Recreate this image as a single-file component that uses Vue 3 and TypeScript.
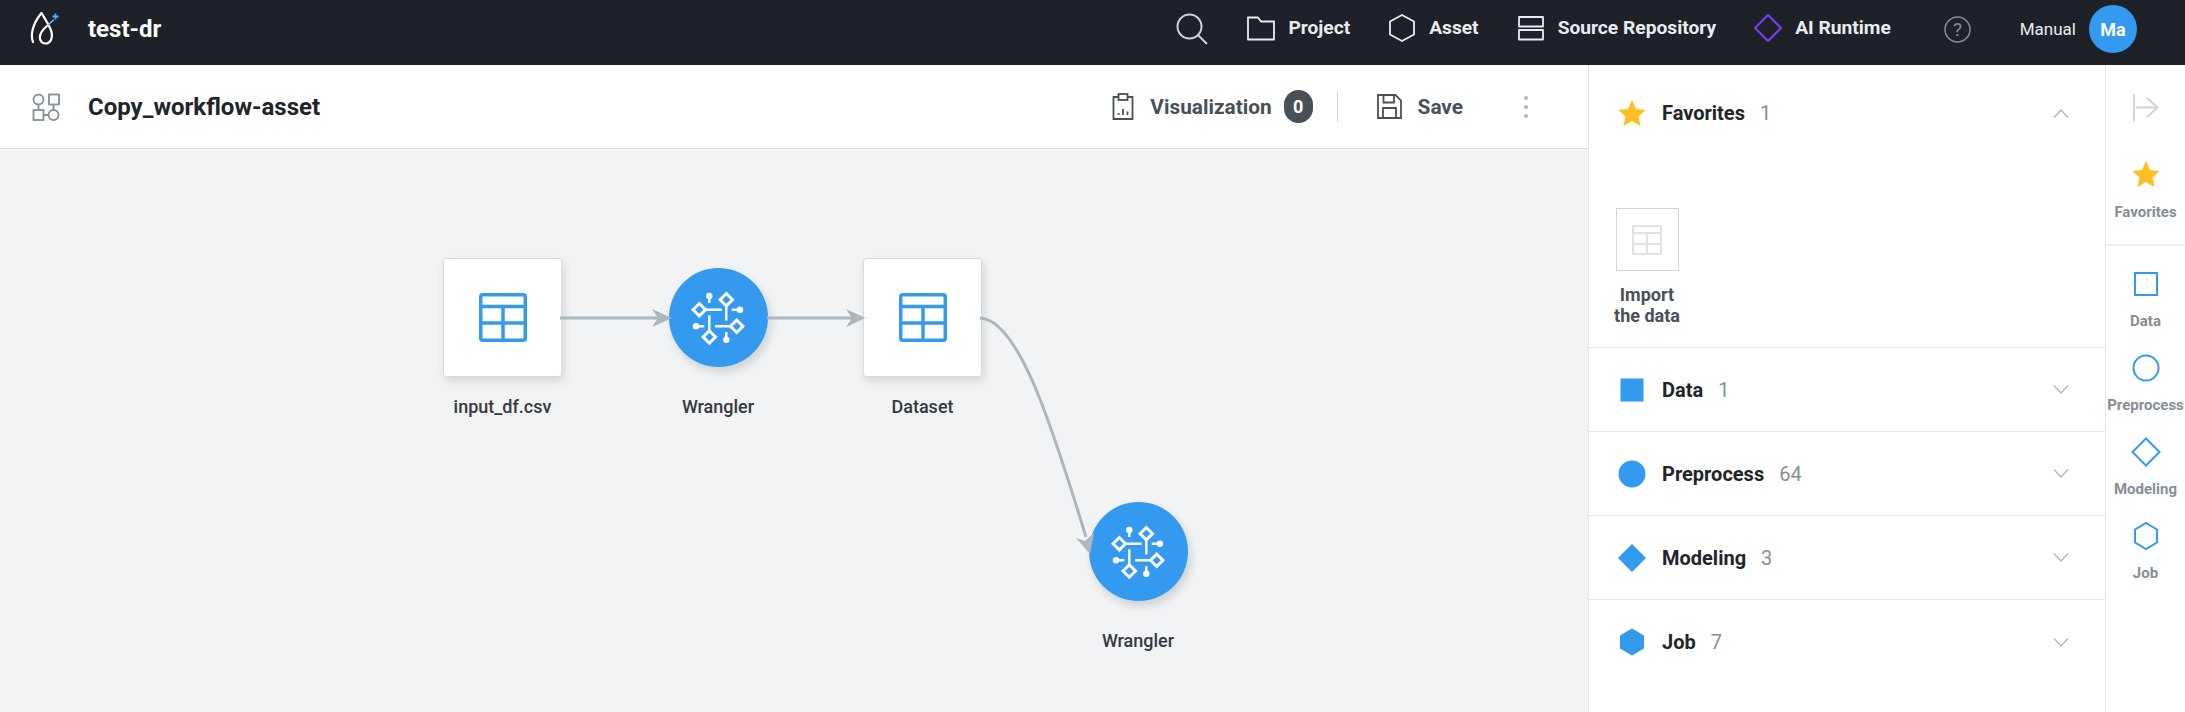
<script setup lang="ts">
interface FlowNode {
  kind: "data" | "job";
  label: string;
  x: number;
  y: number;
}

interface Category {
  name: string;
  count: number;
  shape: string;
}

const navItems = [
  { label: "Project", shape: "folder" },
  { label: "Asset", shape: "hexagon" },
  { label: "Source Repository", shape: "source" },
  { label: "AI Runtime", shape: "diamond" },
];

const categories: Category[] = [
  { name: "Data", count: 1, shape: "square" },
  { name: "Preprocess", count: 64, shape: "circle" },
  { name: "Modeling", count: 3, shape: "diamond" },
  { name: "Job", count: 7, shape: "hexagon" },
];

// x, y = node centre on the canvas
const nodes: FlowNode[] = [
  { kind: "data", label: "input_df.csv", x: 502.5, y: 169 },
  { kind: "job", label: "Wrangler", x: 718, y: 169 },
  { kind: "data", label: "Dataset", x: 922.5, y: 169 },
  { kind: "job", label: "Wrangler", x: 1138, y: 403 },
];

const nodeStyle = (n: FlowNode) => ({ left: `${n.x - 70}px`, top: `${n.y - (n.kind === "data" ? 60 : 50)}px` });
</script>

<template>
  <div class="page">
    <header class="topbar">
      <svg class="logo" width="30" height="34" viewBox="0 0 30 34" fill="none">
        <path d="M3 30C0 23 3 11 11.500 1C15 7 20 14 21.500 20C23 27 20 31.500 15.500 31.500C10.500 31.500 8.500 26 11 21C12.500 18 15 15.500 18 13" stroke="#fff" stroke-width="2.200" stroke-linecap="round" />
        <path d="M18 13L23.500 8" stroke="#74b9ee" stroke-width="1.600" stroke-linecap="round" />
        <path d="M25.500 1.500V7.500M22.500 4.500H28.500" stroke="#4dabf7" stroke-width="1.800" />
      </svg>
      <span class="project-name">test-dr</span>

      <nav class="nav">
        <svg class="search" width="32" height="32" viewBox="0 0 32 32" fill="none" stroke="#ced4da" stroke-width="2">
          <circle cx="13.500" cy="13.500" r="12" />
          <path d="M22 22L31 31" />
        </svg>
        <a v-for="item in navItems" :key="item.label" class="nav-item">
          <svg width="28" height="28" viewBox="0 0 28 28" fill="none" stroke="#e9ecef" stroke-width="1.800" stroke-linejoin="round">
            <path v-if="item.shape === 'folder'" d="M1 3.500H11L14 7.500H27V25.500H1Z" />
            <path v-else-if="item.shape === 'hexagon'" d="M14 1L26 7.500V20.500L14 27L2 20.500V7.500Z" />
            <template v-else-if="item.shape === 'source'">
              <rect x="2" y="3" width="24" height="9.500" />
              <rect x="2" y="16" width="24" height="9.500" />
            </template>
            <path v-else d="M14 1L27 14L14 27L1 14Z" stroke="#7b3ff2" stroke-width="2" />
          </svg>
          <span>{{ item.label }}</span>
        </a>
        <svg class="help" width="27" height="27" viewBox="0 0 27 27" fill="none">
          <circle cx="13.500" cy="13.500" r="12.500" stroke="#868e96" stroke-width="1.500" />
          <text x="13.500" y="19.500" text-anchor="middle" class="help-mark">?</text>
        </svg>
        <span class="user-name">Manual</span>
        <span class="avatar">Ma</span>
      </nav>
    </header>

    <div class="body">
      <main class="workspace">
        <div class="toolbar">
          <svg class="workflow-icon" width="28" height="28" viewBox="0 0 28 28" fill="none" stroke="#868e96" stroke-width="1.800">
            <circle cx="6.500" cy="6.500" r="5" />
            <rect x="17" y="1.500" width="10" height="10" />
            <rect x="1.500" y="17" width="10" height="10" />
            <circle cx="21.500" cy="22" r="5" />
            <path d="M6.500 11.500V17M11.500 22H16.500M21.500 11.500V17" />
          </svg>
          <h1 class="title">Copy_workflow-asset</h1>
          <button class="tool">
            <svg width="22" height="27" viewBox="0 0 22 27" fill="none" stroke="#495057" stroke-width="1.800">
              <path d="M6.500 4H1.500V26H20.500V4H15.500" />
              <rect x="6.500" y="1" width="9" height="6" />
              <path d="M6.500 20V22M11 16V22M15.500 18.500V22" />
            </svg>
            <span>Visualization</span>
          </button>
          <span class="badge">0</span>
          <span class="tool-divider"></span>
          <button class="tool save">
            <svg width="25" height="25" viewBox="0 0 25 25" fill="none" stroke="#495057" stroke-width="1.800">
              <path d="M1 1H18.500L24 6.500V24H1Z" />
              <path d="M6.500 1V8.500H17V1M6 24V14H19V24" />
            </svg>
            <span>Save</span>
          </button>
          <span class="kebab"><i></i><i></i><i></i></span>
        </div>

        <section class="canvas">
          <div v-for="(node, i) in nodes" :key="i" class="node" :style="nodeStyle(node)">
            <div v-if="node.kind === 'data'" class="node-box">
              <svg width="48" height="49" viewBox="0 0 48 49" fill="none" stroke="#339af0" stroke-width="3.500">
                <rect x="1.750" y="1.750" width="44.500" height="45.500" rx="2" />
                <path d="M2 13.500H46M2 30H46M24 13.500V47" />
              </svg>
            </div>
            <div v-else class="node-circle">
              <svg width="56" height="56" viewBox="-28 -28 56 56" fill="none" stroke="#fff" stroke-width="2.400">
                <path d="M-8.700 -22V-15M8.300 -12V2.500M-12 -8.300H3.700M13.700 -8.300H22M-22 8.300H-13.700M-8.700 -2.700V13M-3 8.300H13M8.300 14V21.700" />
                <path d="M8.300 -24.500L14.500 -18.300L8.300 -12.100L2.100 -18.300Z" stroke-width="3" />
                <path d="M-18.700 -14.500L-12.500 -8.300L-18.700 -2.100L-24.900 -8.300Z" stroke-width="3" />
                <path d="M18.700 2.100L24.900 8.300L18.700 14.500L12.500 8.300Z" stroke-width="3" />
                <path d="M-8.700 12.800L-2.500 19L-8.700 25.200L-14.900 19Z" stroke-width="3" />
                <g fill="#fff" stroke="none">
                  <circle cx="-8.700" cy="-22" r="3.200" />
                  <circle cx="22" cy="-8.300" r="3.200" />
                  <circle cx="-22" cy="8.300" r="3.200" />
                  <circle cx="8.300" cy="21.700" r="3.200" />
                </g>
              </svg>
            </div>
            <span class="node-label">{{ node.label }}</span>
          </div>

          <svg class="edges" width="1588" height="563" fill="none" stroke="#adb5bd" stroke-width="3">
            <path d="M560 169H660" />
            <path d="M767 169H855" />
            <path d="M980 169C1018 171 1050 270 1086 388" />
            <g fill="#adb5bd" stroke="none">
              <path d="M672 169L652 160L658 169L652 178Z" />
              <path d="M865.500 169L846 160L852 169L846 178Z" />
              <path d="M1090 405L1076 389L1085 392L1094 384Z" />
            </g>
          </svg>
        </section>
      </main>

      <aside class="panel">
        <section class="favorites">
          <div class="category-row fav-row">
            <svg class="cat-icon" width="28" height="28" viewBox="0 0 28 28">
              <path d="M14 1L18 10L27.500 11L20.500 17.500L22.500 27L14 22L5.500 27L7.500 17.500L0.500 11L10 10Z" fill="#fcc01e" />
            </svg>
            <span class="cat-name">Favorites</span>
            <span class="cat-count">1</span>
            <svg class="chevron" width="16" height="9" viewBox="0 0 16 9" fill="none" stroke="#adb5bd" stroke-width="1.300">
              <path d="M1 8.500L8 1L15 8.500" />
            </svg>
          </div>
          <div class="favorite-item">
            <div class="favorite-box">
              <svg width="30" height="30" viewBox="0 0 30 30" fill="none" stroke="#dee2e6" stroke-width="2">
                <rect x="1" y="1" width="28" height="28" rx="1" />
                <path d="M1 8H29M1 19H29M15 8V29" />
              </svg>
            </div>
            <span class="favorite-label">Import<br />the data</span>
          </div>
        </section>

        <section v-for="cat in categories" :key="cat.name" class="category-row">
          <svg class="cat-icon" width="28" height="28" viewBox="0 0 28 28" fill="#339af0">
            <rect v-if="cat.shape === 'square'" x="2.500" y="2.500" width="23" height="23" />
            <circle v-else-if="cat.shape === 'circle'" cx="14" cy="14" r="13.500" />
            <path v-else-if="cat.shape === 'diamond'" d="M14 0L28 14L14 28L0 14Z" />
            <path v-else d="M14 0.500L26 7.500V20.500L14 27.500L2 20.500V7.500Z" />
          </svg>
          <span class="cat-name">{{ cat.name }}</span>
          <span class="cat-count">{{ cat.count }}</span>
          <svg class="chevron" width="16" height="9" viewBox="0 0 16 9" fill="none" stroke="#adb5bd" stroke-width="1.300">
            <path d="M1 0.500L8 8L15 0.500" />
          </svg>
        </section>
      </aside>

      <aside class="rail">
        <div class="rail-top">
          <svg class="collapse" width="26" height="27" viewBox="0 0 26 27" fill="none" stroke="#ced4da" stroke-width="2">
            <path d="M1 0V27M3 13.500H24M14 4L24.500 13.500L14 23" />
          </svg>
          <svg class="rail-star" width="28" height="28" viewBox="0 0 28 28">
            <path d="M14 1L18 10L27.500 11L20.500 17.500L22.500 27L14 22L5.500 27L7.500 17.500L0.500 11L10 10Z" fill="#fcc01e" />
          </svg>
          <span class="rail-label star-label">Favorites</span>
        </div>
        <div v-for="cat in categories" :key="cat.name" class="rail-item">
          <svg width="30" height="30" viewBox="0 0 30 30" fill="none" stroke="#339af0" stroke-width="2">
            <rect v-if="cat.shape === 'square'" x="4" y="4" width="22" height="22" />
            <circle v-else-if="cat.shape === 'circle'" cx="15" cy="15" r="12.500" />
            <path v-else-if="cat.shape === 'diamond'" d="M15 1.500L28.500 15L15 28.500L1.500 15Z" />
            <path v-else d="M15 2L26 8.500V21.500L15 28L4 21.500V8.500Z" />
          </svg>
          <span class="rail-label">{{ cat.name }}</span>
        </div>
      </aside>
    </div>
  </div>
</template>

<style>
html,
body {
  margin: 0;
  background: #fff;
}
</style>

<style scoped>
.page {
  width: 2185px;
  height: 712px;
  display: flex;
  flex-direction: column;
  overflow: hidden;
  font-family: Roboto, "Liberation Sans", sans-serif;
  color: #212529;
}

.topbar {
  flex: 0 0 65px;
  box-sizing: border-box;
  display: flex;
  align-items: center;
  padding: 0 48px 7px 30px;
  background: #1e2228;
  color: #fff;
}
.logo {
  margin-right: 28px;
}
.project-name {
  font-size: 24px;
  font-weight: 700;
}
.nav {
  margin-left: auto;
  display: flex;
  align-items: center;
}
.search {
  margin-right: 39px;
}
.nav-item {
  display: flex;
  align-items: center;
  gap: 13px;
  margin-right: 38px;
  margin-bottom: 3px;
  font-size: 19.2px;
  font-weight: 700;
  color: #e9ecef;
}
.help {
  margin-left: 15px;
  margin-right: 49px;
}
.help-mark {
  font-size: 19px;
  fill: #868e96;
  font-family: Roboto, sans-serif;
}
.user-name {
  font-size: 17px;
  color: #e9ecef;
  margin-right: 13px;
}
.avatar {
  width: 48px;
  height: 48px;
  border-radius: 50%;
  display: flex;
  align-items: center;
  justify-content: center;
  background: #339af0;
  font-size: 18px;
  font-weight: 700;
}

.body {
  flex: 1;
  display: flex;
  min-height: 0;
}
.workspace {
  width: 1588px;
  display: flex;
  flex-direction: column;
}
.toolbar {
  flex: 0 0 84px;
  box-sizing: border-box;
  display: flex;
  align-items: center;
  padding: 0 60px 0 32px;
  background: #fff;
  border-bottom: 1px solid #d9dde2;
}
.workflow-icon {
  margin-right: 28px;
}
.title {
  margin: 0 auto 0 0;
  font-size: 24px;
  font-weight: 700;
  color: #212529;
}
.tool {
  display: flex;
  align-items: center;
  gap: 16px;
  padding: 0;
  border: 0;
  background: none;
  font-family: inherit;
  font-size: 20.8px;
  font-weight: 700;
  color: #495057;
}
.badge {
  width: 29px;
  height: 33px;
  margin-left: 12px;
  border-radius: 15px;
  display: flex;
  align-items: center;
  justify-content: center;
  background: #495057;
  color: #fff;
  font-size: 18px;
  font-weight: 700;
}
.tool-divider {
  width: 1px;
  height: 30px;
  margin: 0 39px 0 24px;
  background: #ced4da;
}
.save {
  margin-right: 61px;
}
.kebab {
  display: flex;
  flex-direction: column;
  gap: 5px;
}
.kebab i {
  width: 4px;
  height: 4px;
  border-radius: 50%;
  background: #adb5bd;
}

.canvas {
  flex: 1;
  position: relative;
  background: #f1f3f5;
  overflow: hidden;
}
.node {
  position: absolute;
  width: 140px;
  display: flex;
  flex-direction: column;
  align-items: center;
}
.node-box {
  width: 119px;
  height: 119px;
  box-sizing: border-box;
  display: flex;
  align-items: center;
  justify-content: center;
  background: #fff;
  border: 1px solid #d6dade;
  border-radius: 3px;
  box-shadow: 2px 4px 8px rgba(33, 37, 41, 0.14);
}
.node-circle {
  width: 99px;
  height: 99px;
  display: flex;
  align-items: center;
  justify-content: center;
  border-radius: 50%;
  background: #339af0;
  box-shadow: 3px 5px 9px rgba(33, 37, 41, 0.16);
}
.node-label {
  margin-top: 19px;
  font-size: 18px;
  line-height: 22px;
  font-weight: 500;
  color: #343a40;
}
.node-circle + .node-label {
  margin-top: 29px;
}
.edges {
  position: absolute;
  left: 0;
  top: 0;
  pointer-events: none;
}

.panel {
  width: 516px;
  border-left: 1px solid #e4e7ea;
  background: #fff;
}
.favorites {
  height: 283px;
  box-sizing: border-box;
  border-bottom: 1px solid #e4e7ea;
}
.category-row {
  height: 84px;
  box-sizing: border-box;
  display: flex;
  align-items: center;
  padding: 0 36px 0 29px;
  border-bottom: 1px solid #e4e7ea;
}
.category-row:last-child {
  border-bottom: 0;
}
.fav-row {
  height: 96px;
  border-bottom: 0;
}
.cat-icon {
  margin-right: 16px;
}
.cat-name {
  font-size: 20px;
  font-weight: 700;
  color: #212529;
}
.cat-count {
  margin-left: 15px;
  font-size: 20px;
  color: #868e96;
}
.chevron {
  margin-left: auto;
}
.favorite-item {
  width: 100px;
  margin: 47px 0 0 8px;
  display: flex;
  flex-direction: column;
  align-items: center;
}
.favorite-box {
  width: 63px;
  height: 63px;
  box-sizing: border-box;
  display: flex;
  align-items: center;
  justify-content: center;
  border: 1px solid #ced4da;
}
.favorite-label {
  margin-top: 13px;
  text-align: center;
  font-size: 18px;
  line-height: 21px;
  font-weight: 700;
  color: #495057;
}

.rail {
  width: 80px;
  box-sizing: border-box;
  border-left: 1px solid #e4e7ea;
  background: #fff;
}
.rail-top {
  height: 181px;
  box-sizing: border-box;
  display: flex;
  flex-direction: column;
  align-items: center;
  padding-top: 29px;
  border-bottom: 2px solid #eceef0;
}
.rail-star {
  margin-top: 39px;
}
.rail-item {
  height: 84px;
  display: flex;
  flex-direction: column;
  align-items: center;
  padding-top: 23px;
  box-sizing: border-box;
}
.rail-label {
  margin-top: 13px;
  font-size: 15px;
  line-height: 18px;
  font-weight: 700;
  color: #868e96;
}
.star-label {
  margin-top: 15px;
}
</style>
